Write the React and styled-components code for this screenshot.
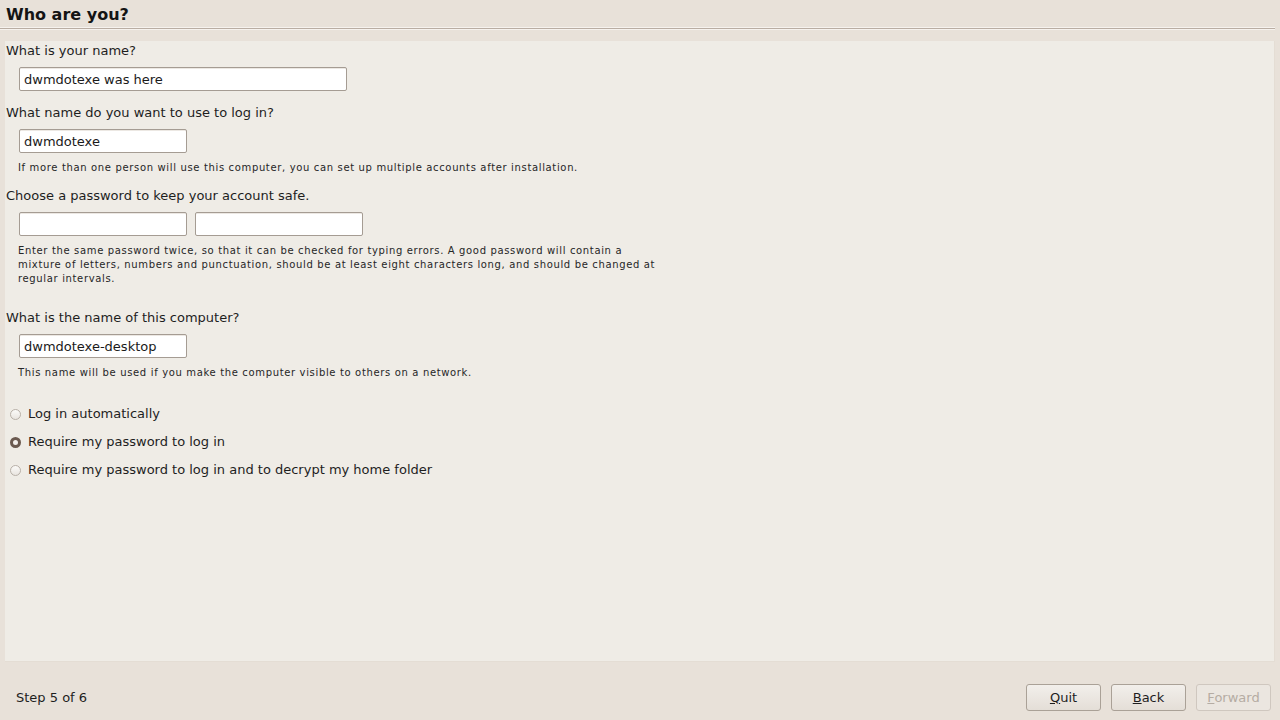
import React, { useState } from 'react'
import styled, { createGlobalStyle } from 'styled-components'

const GlobalStyle = createGlobalStyle`
    html, body {
        margin: 0;
        padding: 0;
        background: #e8e1d9;
    }
    body {
        font-family: "DejaVu Sans", "Liberation Sans", sans-serif;
        color: #1e1e1e;
    }
`

export default function App() {
    const [login, setLogin] = useState('password')

    const options = [
        { id: 'auto', label: 'Log in automatically' },
        { id: 'password', label: 'Require my password to log in' },
        { id: 'encrypt', label: 'Require my password to log in and to decrypt my home folder' },
    ]

    return (
        <>
            <GlobalStyle />
            <Window>
                <Header>
                    <Title>Who are you?</Title>
                    <Separator />
                </Header>
                <Panel>
                    <Section>
                        <Label>What is your name?</Label>
                        <FieldRow>
                            <Field width={328} defaultValue="dwmdotexe was here" autoFocus />
                        </FieldRow>
                    </Section>

                    <Section>
                        <Label>What name do you want to use to log in?</Label>
                        <FieldRow>
                            <Field width={168} defaultValue="dwmdotexe" />
                        </FieldRow>
                        <Hint>If more than one person will use this computer, you can set up multiple accounts after installation.</Hint>
                    </Section>

                    <Section gap={11}>
                        <Label>Choose a password to keep your account safe.</Label>
                        <FieldRow>
                            <Field width={168} type="password" />
                            <Field width={168} type="password" />
                        </FieldRow>
                        <Hint wide>
                            Enter the same password twice, so that it can be checked for typing errors. A good password will contain a
                            mixture of letters, numbers and punctuation, should be at least eight characters long, and should be changed at
                            regular intervals.
                        </Hint>
                    </Section>

                    <Section gap={22}>
                        <Label>What is the name of this computer?</Label>
                        <FieldRow>
                            <Field width={168} defaultValue="dwmdotexe-desktop" />
                        </FieldRow>
                        <Hint>This name will be used if you make the computer visible to others on a network.</Hint>
                    </Section>

                    <RadioGroup>
                        {options.map((o) => (
                            <RadioRow key={o.id} onClick={() => setLogin(o.id)}>
                                <RadioDot checked={login === o.id} />
                                <span>{o.label}</span>
                            </RadioRow>
                        ))}
                    </RadioGroup>
                </Panel>
                <Footer>
                    <Step>Step 5 of 6</Step>
                    <Buttons>
                        <Button><u>Q</u>uit</Button>
                        <Button><u>B</u>ack</Button>
                        <Button disabled><u>F</u>orward</Button>
                    </Buttons>
                </Footer>
            </Window>
        </>
    )
}

const Window = styled.div`
    width: 1280px;
    height: 720px;
    display: flex;
    flex-direction: column;
    background: #e8e1d9;
    overflow: hidden;
`

const Header = styled.div`
    padding: 5px 0 0 0;
`

const Title = styled.h1`
    margin: 0 0 0 6px;
    font-size: 16px;
    font-weight: bold;
    line-height: 20px;
    color: #141414;
`

const Separator = styled.div`
    margin: 2px 5px 0 0;
    height: 1px;
    border-top: 1px solid #f6f2ee;
    background: #b9ada3;
    border-bottom: 1px solid #f6f2ee;
`

const Panel = styled.div`
    margin: 11px 5px 0 5px;
    height: 621px;
    flex-shrink: 0;
    box-sizing: border-box;
    background: #efece6;
    border-right: 1px solid #e4ddd4;
    border-bottom: 1px solid #e4ddd4;
    padding: 0 0 0 1px;
    display: flex;
    flex-direction: column;
`

const Section = styled.div`
    display: flex;
    flex-direction: column;
    margin-top: ${(p) => (p.gap ?? 12)}px;
    &:first-child {
        margin-top: 0;
    }
`

const Label = styled.div`
    font-size: 13px;
    line-height: 18px;
    padding-top: 1px;
    color: #1e1e1e;
`

const FieldRow = styled.div`
    display: flex;
    gap: 8px;
    padding: 7px 0 0 13px;
`

const Field = styled.input`
    width: ${(p) => p.width}px;
    height: 24px;
    box-sizing: border-box;
    border: 1px solid #a59c93;
    border-radius: 2px;
    background: #ffffff;
    box-shadow: inset 0 1px 0 #ece8e3;
    padding: 0 4px;
    font-family: "DejaVu Sans", sans-serif;
    font-size: 13px;
    color: #1a1a1a;
    outline: none;
    caret-color: #000;
`

const Hint = styled.div`
    font-size: 10px;
    line-height: 14px;
    letter-spacing: 0.65px;
    padding: 8px 0 0 12px;
    max-width: ${(p) => (p.wide ? '648px' : 'none')};
    color: #262626;
`

const RadioGroup = styled.div`
    display: flex;
    flex-direction: column;
    gap: 10px;
    margin-top: 25px;
`

const RadioRow = styled.label`
    display: flex;
    align-items: center;
    gap: 7px;
    font-size: 13px;
    line-height: 18px;
    padding-left: 4px;
    cursor: default;
`

const RadioDot = styled.span`
    width: 11px;
    height: 11px;
    border-radius: 50%;
    box-sizing: border-box;
    border: ${(p) => (p.checked ? '3px solid #6b5a50' : '1px solid #b8b0a8')};
    background: ${(p) => (p.checked ? '#f4f0ec' : 'linear-gradient(#fbfaf8, #e9e5e0)')};
`

const Footer = styled.div`
    flex: 1;
    display: flex;
    align-items: center;
    justify-content: space-between;
    padding: 12px 9px 0 16px;
`

const Step = styled.div`
    font-size: 13px;
    color: #1e1e1e;
`

const Buttons = styled.div`
    display: flex;
    gap: 10px;
`

const Button = styled.button`
    width: 75px;
    height: 27px;
    border: 1px solid #aaa197;
    border-radius: 3px;
    background: linear-gradient(#f2efeb, #e4ded7);
    font-family: "DejaVu Sans", sans-serif;
    font-size: 13px;
    color: #1e1e1e;
    padding: 0;
    &:disabled {
        color: #b5aca3;
        border-color: #cfc7bf;
        background: #ebe6e0;
    }
`
